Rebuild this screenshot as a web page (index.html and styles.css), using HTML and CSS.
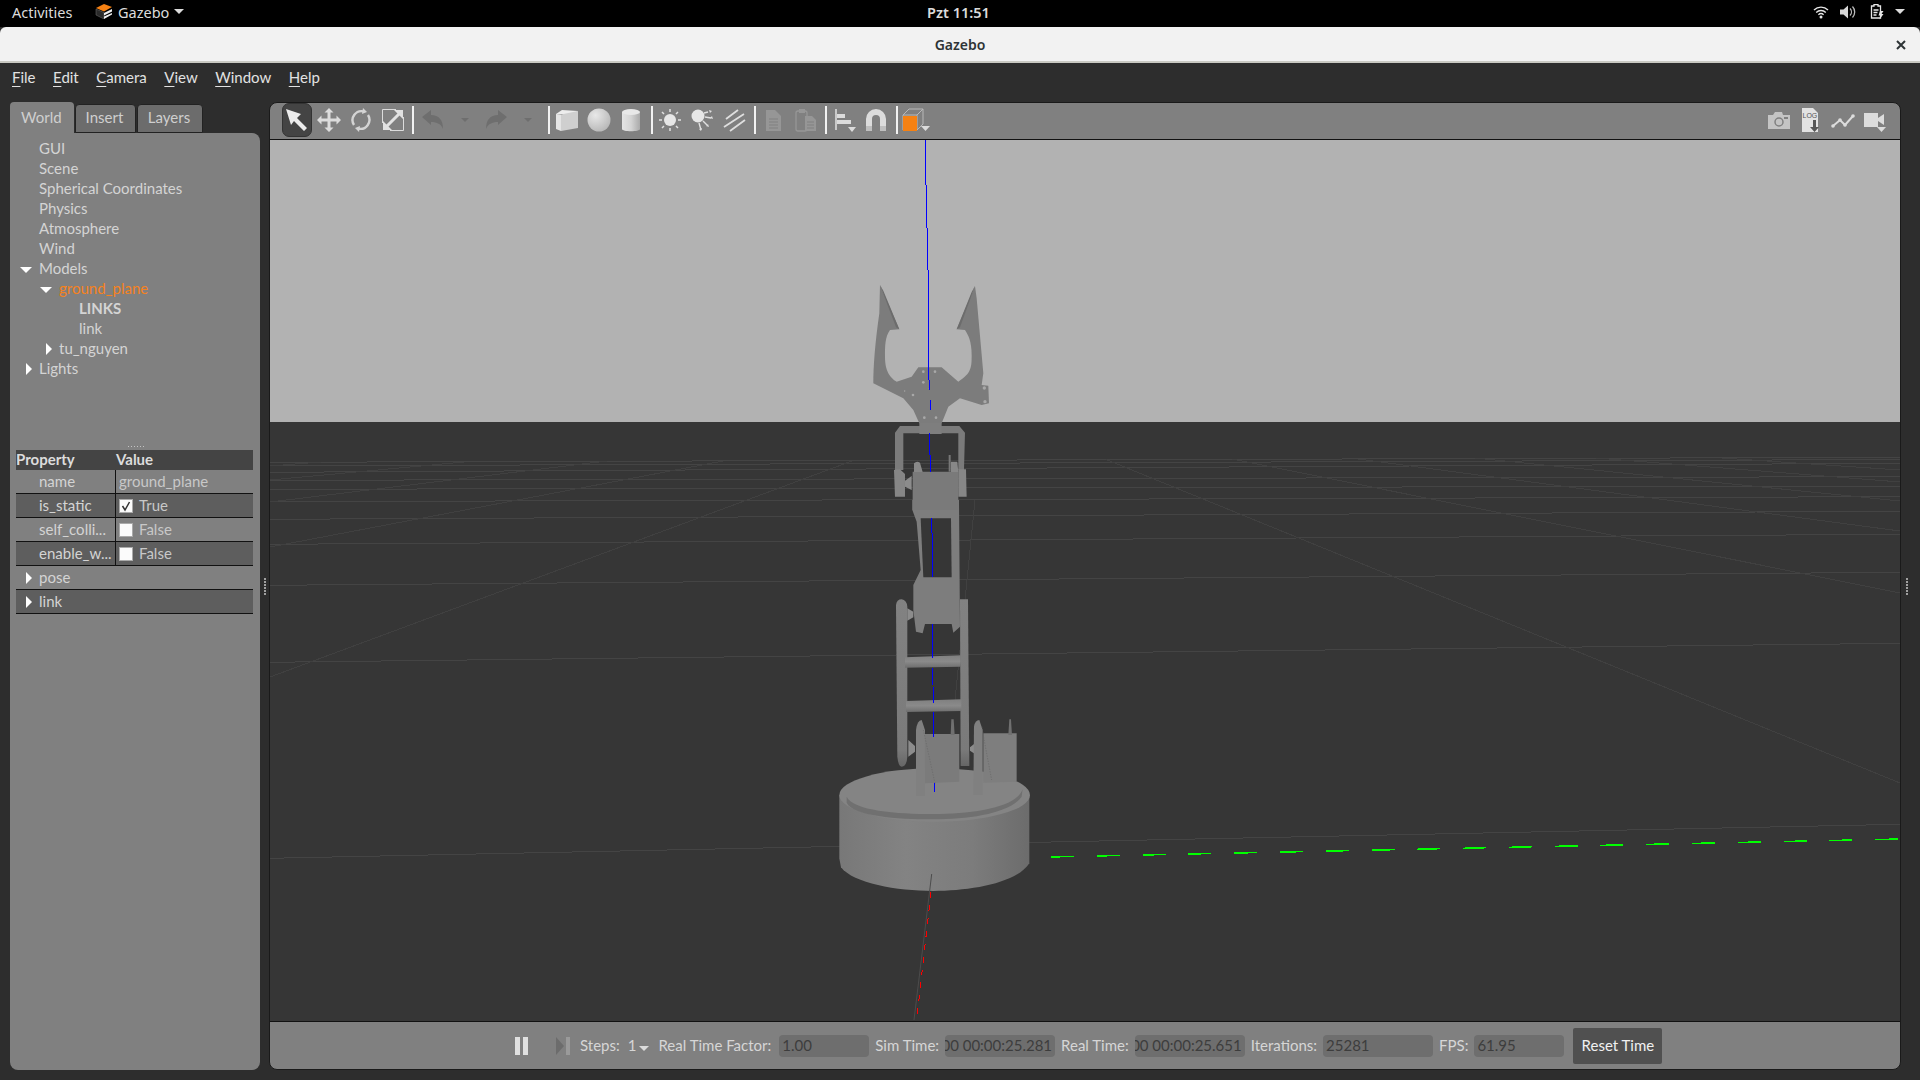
FILE: index.html
```html
<!DOCTYPE html>
<html lang="en">
<head>
<meta charset="utf-8">
<title>Gazebo</title>
<link rel="stylesheet" href="styles.css">
</head>
<body>
<header class="topbar">
  <div class="tb-left">
    <span class="activities">Activities</span>
    <span class="appmenu">
      <svg class="gz-logo" viewBox="0 0 18 15" width="18" height="15"><path d="M1 4 9 0l8 3-8 4.500z" fill="#f58113"/><path d="M1 5l8 3.500V15L1 11z" fill="#2a2a2a" stroke="#777" stroke-width=".5"/><path d="M9 9l8-4v2.500L9 11.500zM9 12.500l8-3.500v1.500L9 15z" fill="#eee"/></svg>
      <span>Gazebo</span><i class="caret"></i>
    </span>
  </div>
  <div class="clock">Pzt 11:51</div>
  <div class="tb-right">
    <svg viewBox="0 0 16 14" width="16" height="14" fill="none" stroke="#e6e6e6" stroke-width="1.400"><path d="M1 5a10 10 0 0 1 14 0M3.200 7.400a7 7 0 0 1 9.600 0M5.400 9.700a4 4 0 0 1 5.200 0"/><circle cx="8" cy="12" r="1.500" fill="#e6e6e6" stroke="none"/></svg>
    <svg viewBox="0 0 16 14" width="16" height="14"><path d="M0 4.500h3.500L8 .5v13L3.500 9.500H0z" fill="#d8d8d8"/><path d="M10 3.500a5 5 0 0 1 0 7M12.500 1.500a8 8 0 0 1 0 11" fill="none" stroke="#bbb" stroke-width="1.300"/></svg>
    <svg class="battery" viewBox="0 0 14 16" width="14" height="16" fill="none" stroke="#e6e6e6" stroke-width="1.300"><path d="M4 2V.7h4V2h2.500v12H1.500V2zM3.500 6h5M3.500 8.500h4M3.500 11h3"/><path d="M10 7l3.500 0-2 3h2L9.500 15.500l1-4H8.500z" fill="#e6e6e6" stroke="none"/></svg>
    <i class="caret"></i>
  </div>
</header>

<div class="titlebar">
  <span class="title">Gazebo</span>
  <svg class="close" viewBox="0 0 10 10" width="10" height="10"><path d="M1 1l8 8M9 1 1 9" stroke="#2e3436" stroke-width="2"/></svg>
</div>

<nav class="menubar">
  <span><u>F</u>ile</span><span><u>E</u>dit</span><span><u>C</u>amera</span><span><u>V</u>iew</span><span><u>W</u>indow</span><span><u>H</u>elp</span>
</nav>

<main class="workspace">
  <aside class="sidebar">
    <div class="tabs">
      <div class="tab active">World</div>
      <div class="tab">Insert</div>
      <div class="tab">Layers</div>
    </div>
    <div class="side-body">
      <div class="tree">
        <div class="row l0">GUI</div>
        <div class="row l0">Scene</div>
        <div class="row l0">Spherical Coordinates</div>
        <div class="row l0">Physics</div>
        <div class="row l0">Atmosphere</div>
        <div class="row l0">Wind</div>
        <div class="row l0"><i class="tw down"></i>Models</div>
        <div class="row l1 orange"><i class="tw down"></i>ground_plane</div>
        <div class="row l2 bold">LINKS</div>
        <div class="row l2">link</div>
        <div class="row l1"><i class="tw right"></i>tu_nguyen</div>
        <div class="row l0"><i class="tw right"></i>Lights</div>
      </div>
      <div class="hgrip"></div>
      <div class="props">
        <div class="phead"><span>Property</span><span>Value</span></div>
        <div class="prow"><span class="pname">name</span><span class="pval">ground_plane</span></div>
        <div class="prow dark"><span class="pname">is_static</span><span class="pval"><i class="check on"><svg viewBox="0 0 14 14" width="14" height="14"><path d="M3.500 7l2.500 4 4.500-8" fill="none" stroke="#333" stroke-width="1.500"/></svg></i>True</span></div>
        <div class="prow"><span class="pname">self_colli...</span><span class="pval"><i class="check"></i>False</span></div>
        <div class="prow dark"><span class="pname">enable_w...</span><span class="pval"><i class="check"></i>False</span></div>
        <div class="pgroup"><i class="tw right"></i>pose</div>
        <div class="pgroup dark"><i class="tw right"></i>link</div>
      </div>
    </div>
  </aside>

  <div class="vgrip"><i></i></div>

  <section class="viewport">
    <div class="toolbar">
      <div class="tools">
        <span class="tool selected"><svg viewBox="0 0 24 24" width="24" height="24"><path d="M1 1l15 5-4 4 10 10-3 3L9 13l-3 4z" fill="#ececec"/></svg></span>
        <span class="tool"><svg viewBox="0 0 24 24" width="24" height="24"><path d="M12 0l4.500 4.500H13.500V10.500h6V7.500L24 12l-4.500 4.500v-3h-6v6h3L12 24l-4.500-4.500h3v-6h-6v3L0 12l4.500-4.500v3h6v-6h-3z" fill="#dcdcdc"/></svg></span>
        <span class="tool"><svg viewBox="0 0 24 24" width="24" height="24" fill="none" stroke="#d4d4d4" stroke-width="2.400"><path d="M5 17A9 9 0 0 1 15 3.500"/><path d="M19 7a9 9 0 0 1-10 13.500"/><path d="M14 0l4 4-5 2z" fill="#d4d4d4" stroke="none"/><path d="M10 24l-4-4 5-2z" fill="#d4d4d4" stroke="none"/></svg></span>
        <span class="tool"><svg viewBox="0 0 24 24" width="24" height="24"><path d="M1.500 15V1.500H15M22.500 9v13.500H9" fill="none" stroke="#dcdcdc" stroke-width="1"/><path d="M6 18 18 6" stroke="#e2e2e2" stroke-width="3"/><path d="M13 2h9v9zM2 13v9h9z" fill="#e2e2e2"/></svg></span>
        <i class="sep first"></i>
        <span class="tool"><svg viewBox="0 0 24 24" width="24" height="24"><path d="M1 9l9-7v5c8 0 12 5 12 14-2-5-6-7-12-7v3z" fill="#6e6e6e"/></svg></span>
        <span class="tool tri-tool"><i class="mini"></i></span>
        <span class="tool"><svg viewBox="0 0 24 24" width="24" height="24"><path d="M23 9l-9-7v5C6 7 2 12 2 21c2-5 6-7 12-7v3z" fill="#6e6e6e"/></svg></span>
        <span class="tool"><i class="mini"></i></span>
        <i class="sep"></i>
        <span class="tool"><svg viewBox="0 0 24 24" width="24" height="24"><path d="M1 6l6-4 16 1-5 3z" fill="#ededed"/><path d="M1 6l5 .5V23l-5-2z" fill="#e4e4e4"/><path d="M6 6.500 23 3v17l-17 3z" fill="#cfcfcf"/></svg></span>
        <span class="tool"><svg viewBox="0 0 24 24" width="24" height="24"><defs><radialGradient id="sph" cx=".35" cy=".3" r=".8"><stop offset="0" stop-color="#e8e8e8"/><stop offset="1" stop-color="#b4b4b4"/></radialGradient></defs><ellipse cx="12" cy="12" rx="11.500" ry="11.500" fill="url(#sph)"/></svg></span>
        <span class="tool"><svg viewBox="0 0 24 24" width="24" height="24"><defs><linearGradient id="cyl"><stop offset="0" stop-color="#e4e4e4"/><stop offset=".5" stop-color="#d4d4d4"/><stop offset="1" stop-color="#aaa"/></linearGradient></defs><path d="M3 4v17c0 3 18 3 18 0V4z" fill="url(#cyl)"/><ellipse cx="12" cy="4" rx="9" ry="3" fill="#e8e8e8"/></svg></span>
        <i class="sep"></i>
        <span class="tool"><svg viewBox="0 0 24 24" width="24" height="24"><circle cx="12" cy="12" r="6" fill="#e6e6e6"/><g stroke="#e0e0e0" stroke-width="1.500"><path d="M12 1v3M12 20v3M1 12h3M20 12h3M4 4l2 2M18 18l2 2M20 4l-2 2M6 18l-2 2"/></g></svg></span>
        <span class="tool"><svg viewBox="0 0 24 24" width="24" height="24"><circle cx="8" cy="8" r="6.500" fill="#e6e6e6"/><g stroke="#e0e0e0" stroke-width="1.400"><path d="M14 5l4-1M15 9l6 1M13 13l4 4M9 15l2 7"/></g><path d="M19 2l3 1-2 2zM22 8l1 3-3-1zM18 16l1 3-3-1zM12 20l-1 3-2-2z" fill="#e0e0e0"/></svg></span>
        <span class="tool"><svg viewBox="0 0 24 24" width="24" height="24" stroke="#dedede" stroke-width="1.800"><path d="M4 11 16 2M2 19 22 6M8 23l15-11"/></svg></span>
        <i class="sep"></i>
        <span class="tool"><svg viewBox="0 0 24 24" width="24" height="24"><path d="M5 2h9l6 6v15H5z" fill="#969696"/><path d="M8 11h9M8 14h9M8 17h9M8 20h9" stroke="#808080"/></svg></span>
        <span class="tool"><svg viewBox="0 0 24 24" width="24" height="24"><rect x="3" y="3" width="11" height="20" rx="2" fill="none" stroke="#969696" stroke-width="1.300"/><rect x="6" y="1" width="6" height="4" fill="#969696"/><path d="M12 8h7l4 4v11H12z" fill="#969696"/><path d="M14 14h7M14 17h7M14 20h7" stroke="#808080"/></svg></span>
        <i class="sep"></i>
        <span class="tool"><svg viewBox="0 0 24 24" width="24" height="24"><path d="M4 1v21" stroke="#dcdcdc" stroke-width="1.600"/><path d="M5 6h8v4H5zM5 12h14v4H5z" fill="#dcdcdc"/><path d="M16 19h8l-4 5z" fill="#dcdcdc"/></svg></span>
        <span class="tool"><svg viewBox="0 0 24 24" width="24" height="24"><path d="M2 23V11a10 10 0 0 1 20 0v12h-6V11a4 4 0 0 0-8 0v12z" fill="#dcdcdc"/><path d="M2 18h6v5H2zM16 18h6v5h-6z" fill="#bfbfbf"/></svg></span>
        <i class="sep"></i>
        <span class="tool wide"><svg viewBox="0 0 32 24" width="32" height="24"><path d="M2 7 8 1h14v15l-6 6H2zM2 7h14v15M16 7l6-6" fill="none" stroke="#b8b8b8"/><rect x="2" y="8" width="14" height="15" fill="#f58113"/><path d="M20 18h9l-4.500 5z" fill="#dcdcdc"/></svg></span>
      </div>
      <div class="tools">
        <span class="tool"><svg viewBox="0 0 24 24" width="24" height="24"><path d="M1 7h5l2-3h7l1 3h7v14H1z" fill="#c4c4c4"/><circle cx="12" cy="14" r="4" fill="none" stroke="#808080" stroke-width="1.500"/><rect x="17" y="9" width="4" height="2" fill="#808080"/></svg></span>
        <span class="tool"><svg viewBox="0 0 24 24" width="24" height="24"><path d="M3 0h11l5 5v19H3z" fill="#e2e2e2"/><text x="3.500" y="9.500" class="logtext">LOG</text><path d="M14 12h3v7h3l-4.500 5-4.500-5h3z" fill="#555"/></svg></span>
        <span class="tool"><svg viewBox="0 0 24 24" width="24" height="24"><path d="M2 18l7-6 5 5 8-9" fill="none" stroke="#dcdcdc" stroke-width="2"/><circle cx="2" cy="18" r="1.800" fill="#dcdcdc"/><circle cx="9" cy="12" r="1.800" fill="#dcdcdc"/><circle cx="14" cy="17" r="1.800" fill="#dcdcdc"/><circle cx="22" cy="8" r="1.800" fill="#dcdcdc"/></svg></span>
        <span class="tool"><svg viewBox="0 0 24 24" width="24" height="24"><path d="M1 5h14v14H1zM15 10l6-4v11l-6-4z" fill="#dcdcdc"/><path d="M14 19h9l-4.500 5z" fill="#dcdcdc"/></svg></span>
      </div>
    </div>

    <svg class="scene" viewBox="270 140 1630 881" preserveAspectRatio="none">
      <defs>
        <linearGradient id="baseg"><stop offset="0" stop-color="#787878"/><stop offset=".35" stop-color="#838383"/><stop offset=".7" stop-color="#7c7c7c"/><stop offset="1" stop-color="#6c6c6c"/></linearGradient>
        <linearGradient id="barg" x1="0" y1="0" x2="0" y2="1"><stop offset="0" stop-color="#808080"/><stop offset=".5" stop-color="#8a8a8a"/><stop offset="1" stop-color="#6e6e6e"/></linearGradient>
        <linearGradient id="railg" x1="0" y1="0" x2="0" y2="1"><stop offset="0" stop-color="#828282"/><stop offset=".9" stop-color="#7a7a7a"/><stop offset="1" stop-color="#666"/></linearGradient>
      </defs>
      <rect x="270" y="140" width="1630" height="282" fill="#b2b2b2"/>
      <rect x="270" y="422" width="1630" height="599" fill="#363636"/>
      <g class="grid">
        <path d="M270 462.300 1900 457.300M270 466 1900 459.500M270 472.300 1900 463.300M270 480.300 1900 476.700M270 489.300 1900 486M270 501.700 1900 496.700M270 519.300 1900 511.300M270 544.300 1900 534.300M270 585.300 1900 572.300M270 662.300 1900 643.300M270 858.300 1900 824.300"/>
        <path class="diag" d="M1105.600 459.300 1900 783M1232 459 1900 593M1358 459 1900 531M1475 458 1900 501M1596 458 1900 482M1722 458 1900 470M852 461 270 677M723 461 270 547M607 461 270 502M464 462 270 480M321 462 270 466M975 500 955 700"/>
      </g>

      <g transform="translate(820 720) scale(.3333)">
        <path d="M58 225V415L63 442C100 490 230 513 340 513 450 513 590 490 628 430V225z" fill="url(#baseg)"/>
        <ellipse cx="344" cy="225" rx="286" ry="80" fill="#848484"/>
        <path d="M80 230C100 272 230 282 340 282 460 282 590 262 608 208L605 230C570 280 450 298 340 298 230 298 100 288 80 248z" fill="#707070"/>
      </g>
      <path d="M931.700 874 914 1020" stroke="#4c4c4c" fill="none"/>
      <path class="crisp" d="M931 892 917 1017" stroke="#f00" stroke-dasharray="6 7" fill="none"/>

      <g transform="translate(880 500) scale(.3333)">
        <path d="M48 315Q50 298 65 298 80 300 82 320V770Q80 800 65 800 55 800 52 770z" fill="url(#railg)"/>
        <path d="M240 298H264L268 798H242z" fill="url(#railg)"/>
        <path d="M75 472 242 466V500L75 503z" fill="url(#barg)"/>
        <path d="M78 603 244 598V633L78 636z" fill="url(#barg)"/>
        <path d="M82 325 100 335V352L82 362zM85 720 105 738V755L85 770zM285 730 270 742V752L285 762z" fill="#8c8c8c"/>
        <path d="M108 690Q112 660 125 660L135 690V888H108z" fill="#808080"/>
        <path d="M135 702H238V845L135 850z" fill="#7b7b7b"/>
        <path d="M282 680Q285 660 298 660L308 690V885H280z" fill="#808080"/>
        <path d="M310 700H410V845L310 848z" fill="#7e7e7e"/>
        <path d="M214 658H221L224 705H212zM388 658H393L396 705H385z" fill="#707070"/>
        <path d="M130 690 165 850M305 680 335 840" stroke="#666" stroke-dasharray="4 4" stroke-width="2" fill="none"/>
        <path d="M97 0H237L240 380 220 398 215 372H135L128 400 108 395 100 330V255L122 210 110 65 97 30z" fill="#7d7d7d"/>
        <path d="M122 55H213L215 232H130z" fill="#363636"/>
      </g>

      <g transform="translate(840 270) scale(.3333)">
        <path d="M218 605H355V720H218z" fill="#7a7a7a"/>
        <path d="M180 468H358L375 488 372 600H355V490H190V600H165V488z" fill="#7b7b7b"/>
        <path d="M162 600Q165 598 180 598L195 612V680H165zM355 598H378L380 680H355z" fill="#868686"/>
        <path d="M195 632 215 618V660L195 650z" fill="#8c8c8c"/>
        <path d="M222 580Q230 572 240 578L248 606H222zM333 575H352L355 606H333z" fill="#888"/>
        <path d="M326 555H332V605H326z" fill="#777"/>
        <path d="M120 45 178 178 150 180C135 200 135 230 135 260 135 310 155 325 170 335L215 320 235 292H305L355 335C395 310 395 290 395 255 395 215 385 195 375 180L350 178 405 48 410 85 430 310 425 345 445 347 447 400 425 405 360 385 325 410 305 460H238L220 420 190 385 100 340C100 290 105 220 118 130z" fill="#7c7c7c"/>
        <path d="M120 45 130 62 178 178 168 172zM405 48 395 66 350 178 360 172z" fill="#6c6c6c"/>
        <path d="M238 458H305V492H238z" fill="#7e7e7e"/>
        <g fill="#a8a8a8"><circle cx="250" cy="305" r="4"/><circle cx="285" cy="305" r="4"/><circle cx="250" cy="337" r="4"/><circle cx="268" cy="355" r="2"/><circle cx="219" cy="375" r="4"/><circle cx="194" cy="363" r="2"/><circle cx="253" cy="443" r="4"/><circle cx="288" cy="443" r="4"/><circle cx="433" cy="354" r="5"/><circle cx="435" cy="395" r="5"/></g>
      </g>

      <path class="axis-z crisp" d="M925 140V185M926 185V228M927 228V270M928 270V302.700M928 302.700V380M929 380V390M930 400V410M929 433V455M930 455V472M931 518V533M932 533V577M932 624V658M932 668V685M933 687V703M933 712V737M934 783V792"/>
      <path class="crisp green" d="M1051 857 1899 839" stroke="#00ff00" stroke-dasharray="23 22.800" fill="none"/>
    </svg>

    <div class="statusbar">
      <svg class="st-pause" viewBox="0 0 14 18" width="14" height="18"><path d="M0 0h5v18H0zM8 0h5v18H8z" fill="#e0e0e0"/></svg>
      <svg class="st-step" viewBox="0 0 14 18" width="14" height="18"><path d="M0 0l8 9-8 9z" fill="#6c6c6c"/><path d="M10 0h4v18h-4z" fill="#9a9a9a"/></svg>
      <span class="lbl steps">Steps:</span><span class="lbl one">1</span><i class="mini st-mini"></i>
      <span class="lbl rtf">Real Time Factor:</span><span class="field short">1.00</span>
      <span class="lbl">Sim Time:</span><span class="field clip"><span>00 00:00:25.281</span></span>
      <span class="lbl">Real Time:</span><span class="field clip"><span>00 00:00:25.651</span></span>
      <span class="lbl">Iterations:</span><span class="field">25281</span>
      <span class="lbl">FPS:</span><span class="field short">61.95</span>
      <span class="reset">Reset Time</span>
    </div>
  </section>

  <div class="vgrip right"><i></i></div>
</main>
</body>
</html>
```

FILE: styles.css
```css
* { box-sizing: border-box; }
html, body { margin: 0; height: 100%; }
body {
  width: 1920px;
  height: 1080px;
  overflow: hidden;
  display: flex;
  flex-direction: column;
  background: #2d2d2d;
  font-family: "Lato", "Noto Sans", sans-serif;
  font-size: 15px;
  color: #d4d4d4;
}
i { font-style: normal; display: block; }

.topbar {
  height: 27px;
  flex: none;
  background: #000;
  color: #dcdcdc;
  font-family: "Noto Sans", sans-serif;
  font-size: 14.500px;
  display: grid;
  grid-template-columns: 1fr auto 1fr;
  align-items: center;
  padding: 0 15px 4px 12px;
}
.tb-left { display: flex; align-items: center; }
.activities { width: 83px; }
.appmenu { display: flex; align-items: center; }
.gz-logo { margin-right: 5px; }
.caret {
  width: 0; height: 0;
  border-left: 5px solid transparent;
  border-right: 5px solid transparent;
  border-top: 5px solid #dcdcdc;
}
.appmenu .caret { margin-left: 5px; }
.clock { font-weight: 600; font-size: 14.500px; }
.tb-right { display: flex; align-items: center; justify-content: flex-end; gap: 11px; }
.battery { margin-left: 3px; }

.titlebar {
  height: 36px;
  flex: none;
  background: #f2f2f2;
  border-radius: 6px 6px 0 0;
  border-bottom: 2px solid #c9c9c2;
  display: flex;
  align-items: center;
  justify-content: center;
  position: relative;
  color: #2e3436;
  font-family: "Noto Sans", sans-serif;
  font-size: 14px;
  font-weight: 600;
}
.close { position: absolute; right: 14px; top: 13px; }

.menubar {
  height: 39px;
  flex: none;
  display: flex;
  padding: 4px 0 0 12px;
  color: #e2e2e2;
  line-height: 20px;
}
.menubar span { margin-right: 17.500px; }
.menubar u { text-underline-offset: 3px; }

.workspace {
  flex: 1;
  min-height: 0;
  display: flex;
  padding: 0 7px 10px 10px;
}
.sidebar { width: 250px; flex: none; display: flex; flex-direction: column; }
.tabs { height: 31px; flex: none; display: flex; align-items: flex-end; gap: 1px; }
.tab {
  height: 29px;
  padding: 0 11.500px 0 10px;
  background: #6c6c6c;
  border: 1px solid #222;
  border-radius: 4px 4px 0 0;
  color: #cfcfcf;
  line-height: 25px;
  font-size: 15px;
}
.tab.active {
  height: 31px;
  background: #808080;
  border: 0;
  line-height: 30px;
  padding: 0 12px 0 11px;
}
.side-body {
  flex: 1;
  background: #808080;
  border-radius: 0 8px 8px 8px;
  display: flex;
  flex-direction: column;
  padding: 5px 6px 0;
}
.tree { height: 305px; flex: none; margin-left: -6px; }
.row { height: 20px; line-height: 20px; display: flex; align-items: center; position: relative; }
.l0 { padding-left: 29px; }
.l1 { padding-left: 49px; }
.l2 { padding-left: 69px; }
.orange { color: #f5821f; }
.bold { font-weight: 700; }
.tw { position: absolute; width: 0; height: 0; }
.tw.down {
  border-left: 6px solid transparent;
  border-right: 6px solid transparent;
  border-top: 6px solid #fff;
  margin-left: -19px;
  margin-top: 3px;
}
.tw.right {
  border-top: 6px solid transparent;
  border-bottom: 6px solid transparent;
  border-left: 6px solid #fff;
  margin-left: -13px;
  margin-top: 1px;
}
.hgrip {
  height: 7px;
  flex: none;
  margin-left: 112px;
  width: 18px;
  background: repeating-linear-gradient(90deg, #c4c4c4 0 1px, transparent 1px 3px) center 3px / 100% 1px no-repeat;
}
.props { width: 237px; flex: none; }
.phead {
  height: 20px;
  background: #444;
  display: grid;
  grid-template-columns: 100px 1fr;
  font-weight: 700;
  line-height: 18px;
  color: #dcdcdc;
}
.prow, .pgroup {
  height: 24px;
  border-bottom: 1px solid #111;
  line-height: 23px;
}
.prow { display: grid; grid-template-columns: 100px 1fr; }
.dark { background: #5e5e5e; }
.pname { padding-left: 23px; border-right: 1px solid #111; white-space: nowrap; overflow: hidden; }
.pval { padding-left: 3px; display: flex; align-items: center; color: #c8c8c8; }
.check {
  width: 14px; height: 14px;
  background: #fbfbfb;
  border: 1px solid #aaa;
  margin-right: 6px;
}
.check svg { display: block; margin: -1px; }
.pgroup { padding-left: 23px; position: relative; display: flex; align-items: center; }
.pgroup .tw { left: 23px; }

.vgrip { width: 9px; flex: none; display: flex; align-items: center; justify-content: center; }
.vgrip.right { width: 12px; }
.vgrip i {
  width: 2px; height: 17px;
  background: repeating-linear-gradient(180deg, #a0a0a0 0 2px, transparent 2px 3px);
}

.viewport {
  flex: 1;
  min-width: 0;
  display: flex;
  flex-direction: column;
  background: #808080;
  border: 1px solid #1a1a1a;
  border-radius: 8px;
  overflow: hidden;
}
.toolbar {
  height: 37px;
  flex: none;
  display: flex;
  justify-content: space-between;
  align-items: center;
  padding: 0 9px 2px 11px;
  border-bottom: 1px solid #111;
}
.tools { display: flex; align-items: center; }
.tool { width: 32px; height: 34px; display: flex; align-items: center; justify-content: center; }
.tool.wide { width: 36px; }
.tool.selected { width: 30px; margin: 0 1px; background: #444; border-radius: 7px; border: 1px solid #333; }
.tool svg { flex: none; }
.tri-tool { width: 31px; margin-right: 0; }
.sep { width: 2px; height: 28px; background: #f2f2f2; margin: 0 1px 0 4px; }
.sep.first { margin: 0 3px 0 3px; }
.mini {
  width: 0; height: 0;
  border-left: 4px solid transparent;
  border-right: 4px solid transparent;
  border-top: 4px solid #6e6e6e;
}
.logtext { font-family: "Liberation Sans", sans-serif; font-size: 7px; fill: #555; }

.scene { display: block; flex: none; width: 1630px; height: 881px; }
.grid path { stroke: #444; stroke-width: 1; fill: none; shape-rendering: crispEdges; }
.grid path.diag { stroke: #404040; }
.crisp { shape-rendering: crispEdges; stroke-width: 1; }
.green { stroke-width: 1.400; }
.axis-z { stroke: #0000ff; fill: none; }

.statusbar {
  flex: 1;
  min-height: 0;
  display: flex;
  align-items: center;
  border-top: 1px solid #111;
  padding-left: 245px;
  color: #d6d6d6;
}
.st-pause { margin-right: 27px; }
.st-step { margin-right: 10px; }
.lbl { margin: 0 6px 2px 0; white-space: nowrap; }
.steps { margin-right: 8px; }
.one { margin-right: 3px; }
.rtf { margin-right: 8px; }
.st-mini { border-top-color: #dcdcdc; border-left-width: 5px; border-right-width: 5px; border-top-width: 5px; margin: 5px 9px 0 0; }
.field {
  width: 110px;
  height: 22px;
  flex: none;
  margin-right: 6px;
  padding-left: 3px;
  background: #6e6e6e;
  border-radius: 4px;
  color: #3d3d3d;
  line-height: 20px;
  overflow: hidden;
  white-space: nowrap;
}
.field.short { width: 90px; }
.field.clip { display: flex; justify-content: flex-end; padding: 0 3px 0 0; }
.field.clip span { flex: none; }
.reset {
  height: 36px;
  width: 89px;
  margin-left: 3px;
  background: #505050;
  border-radius: 2px;
  color: #f0f0f0;
  text-align: center;
  line-height: 34px;
}
```
